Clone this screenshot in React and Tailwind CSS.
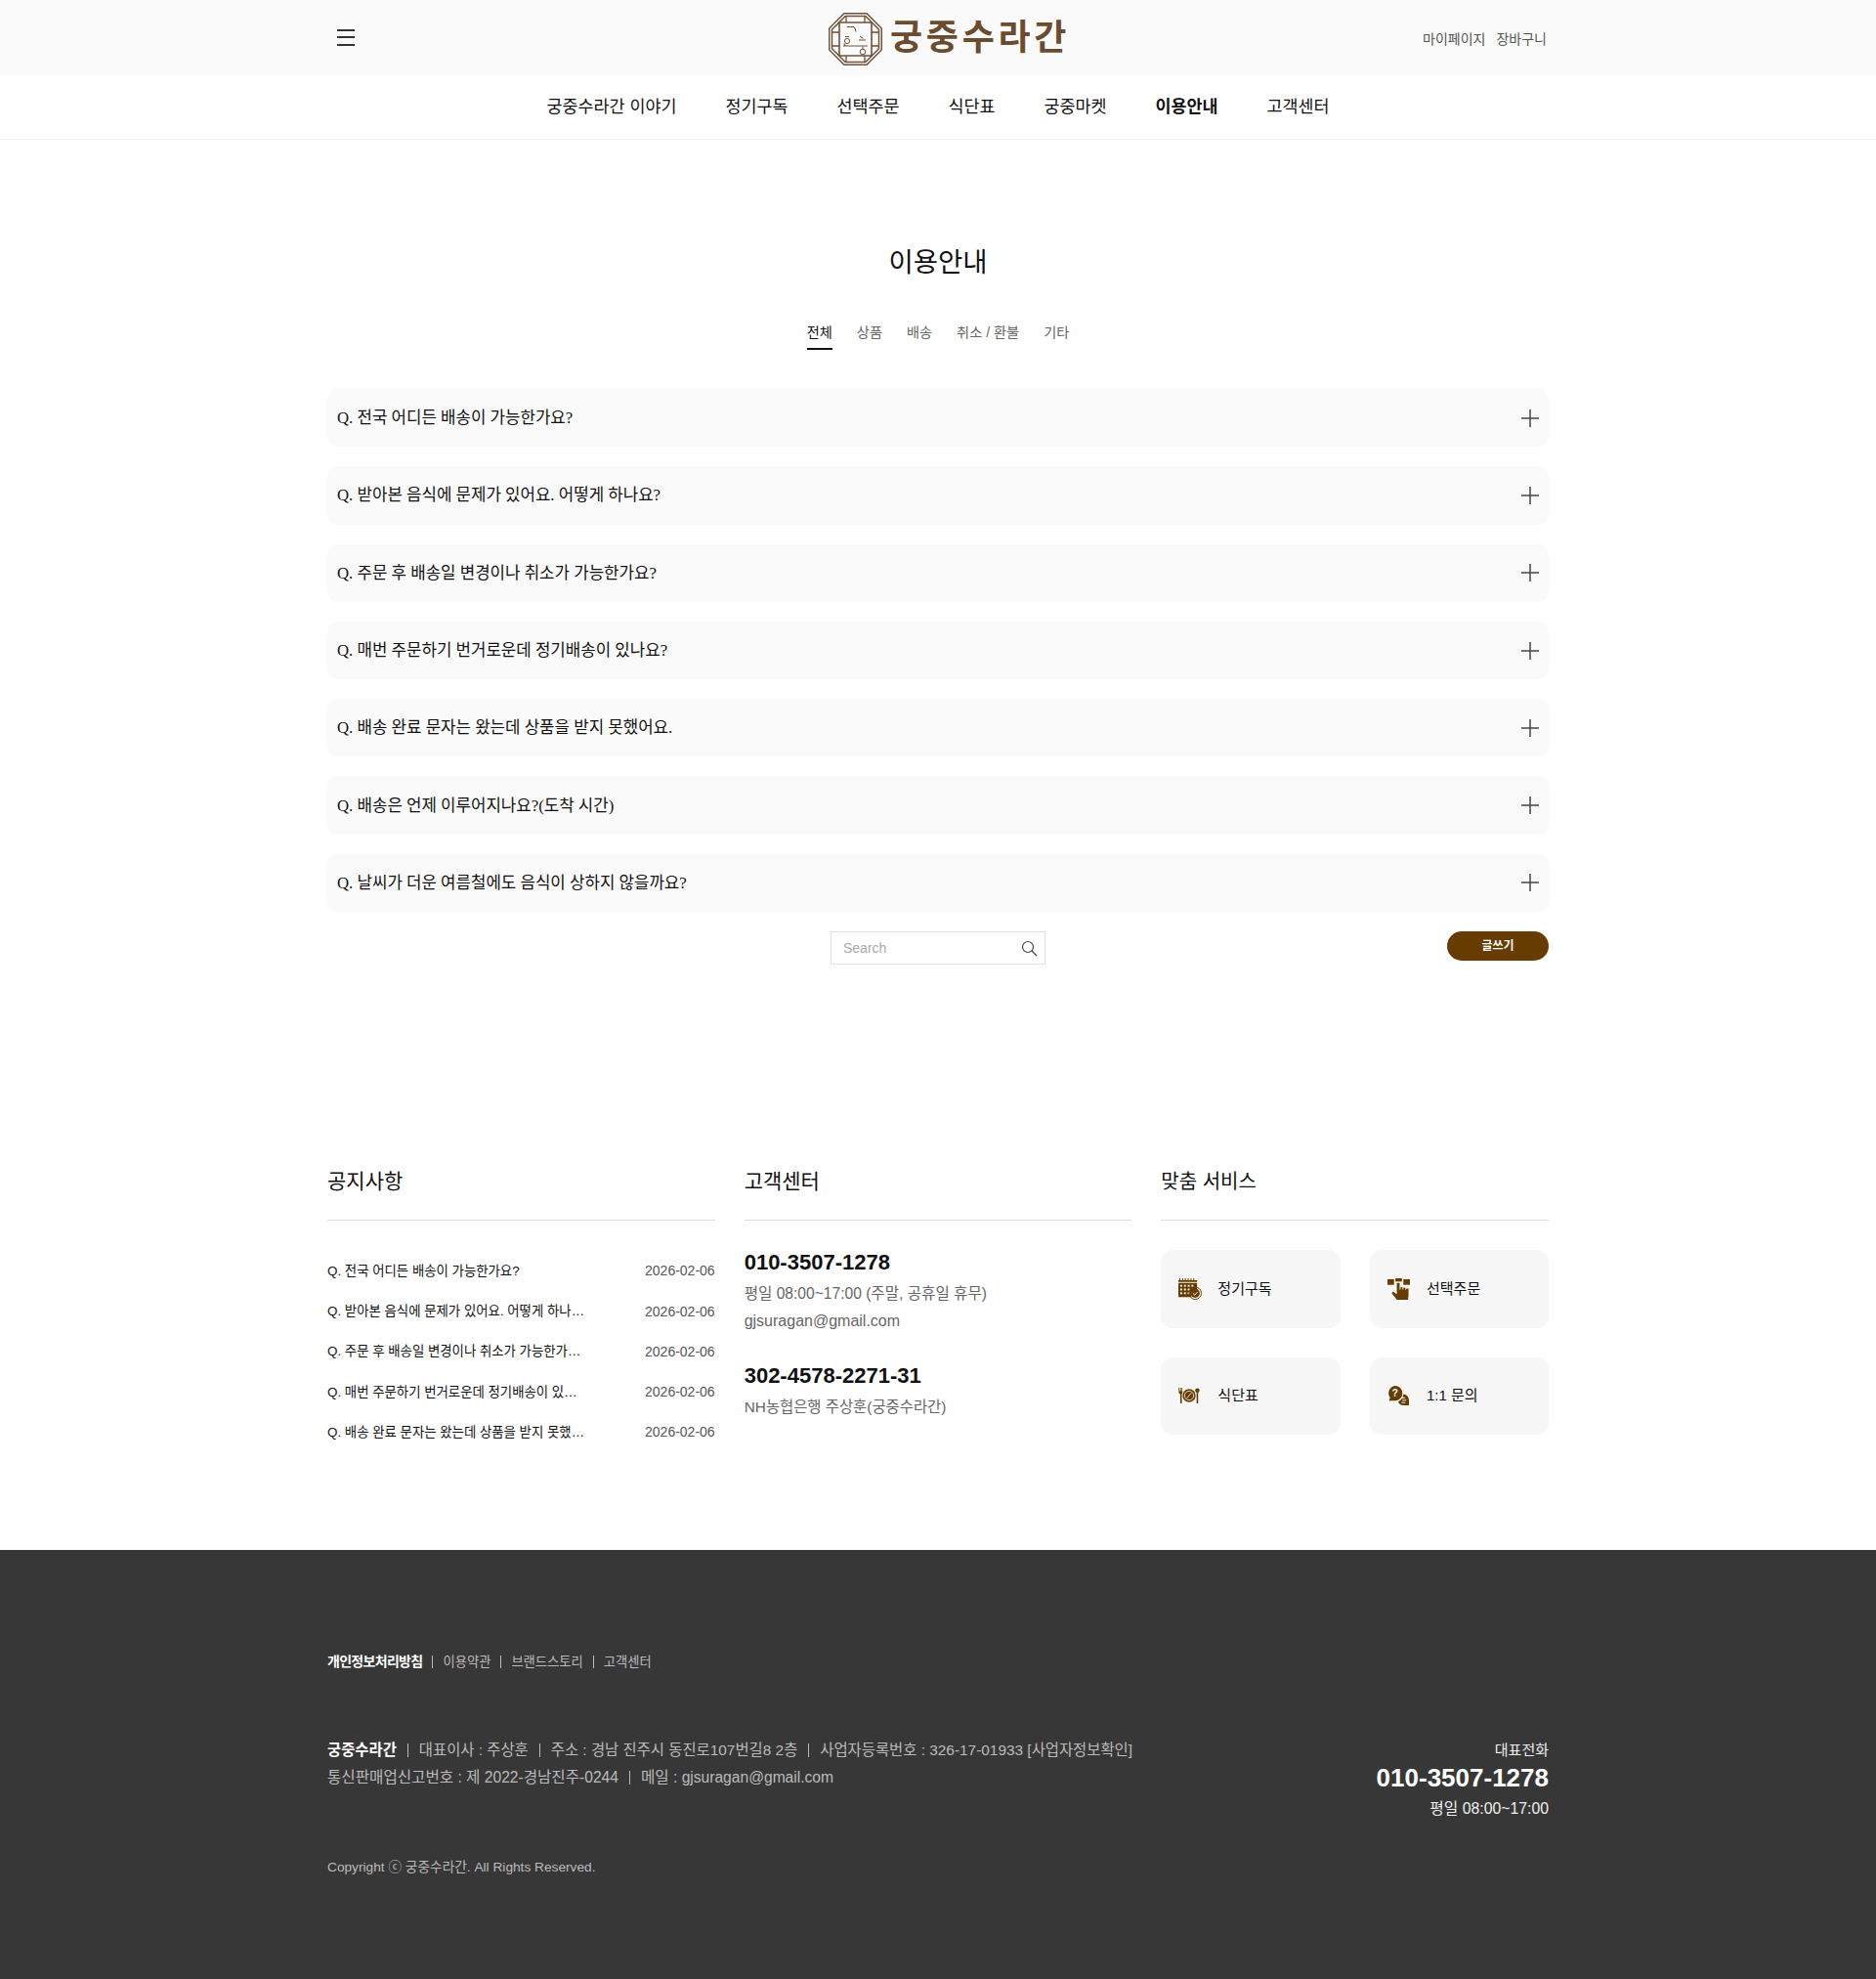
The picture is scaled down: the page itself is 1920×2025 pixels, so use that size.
const sans = `font-['Liberation_Sans','Noto_Sans_CJK_KR',sans-serif]`

const navItems = ["궁중수라간 이야기", "정기구독", "선택주문", "식단표", "궁중마켓", "이용안내", "고객센터"]
const tabs = ["전체", "상품", "배송", "취소 / 환불", "기타"]
const faqs = [
 "전국 어디든 배송이 가능한가요?",
 "받아본 음식에 문제가 있어요. 어떻게 하나요?",
 "주문 후 배송일 변경이나 취소가 가능한가요?",
 "매번 주문하기 번거로운데 정기배송이 있나요?",
 "배송 완료 문자는 왔는데 상품을 받지 못했어요.",
 "배송은 언제 이루어지나요?(도착 시간)",
 "날씨가 더운 여름철에도 음식이 상하지 않을까요?",
]

function Emblem() {
 return (
  <svg width="55" height="54" viewBox="0 0 55 54" fill="none" stroke="#6f5238">
   <path d="M16 .7H39L54.3 16V38L39 53.3H16L.7 38V16Z" strokeWidth="1.5" />
   <path d="M17.2 3.5H37.8L51.5 17.2V36.8L37.8 50.5H17.2L3.5 36.8V17.2Z" strokeWidth="1.5" />
   <path d="M11 10H44V44H11Z" strokeWidth="1.6" />
   <path d="M18 3.5V10M37 3.5V10M18 44V50.5M37 44V50.5M3.5 20H11M3.5 34H11M44 20H51.5M44 34H51.5" strokeWidth="1.3" />
   <path d="M19 14.5h6.5c1.6 1 2.4 2.6 2.4 5" strokeWidth="1.1" />
   <circle cx="19" cy="29" r="2.6" strokeWidth="1" />
   <path d="M17 24.5h4M32 24l3.5 2.5M31 28h7" strokeWidth="1" />
   <path d="M15 34H40M16 31.5c0 2 .5 2.5 2 2.5" strokeWidth="1.1" />
   <circle cx="35" cy="40" r="2.8" strokeWidth="1" />
   <path d="M35 34.5v2.5" strokeWidth="1" />
  </svg>
 )
}

function CalendarIcon() {
 return (
  <svg width="24" height="22" viewBox="0 0 25 23" fill="#663c00">
   <path d="M0 2h20v2H0zM1 0h1v2H1zM4 0h1v2H4zM7 0h1v2H7zM10 0h1v2h-1zM13 0h1v2h-1zM16 0h1v2h-1z" />
   <path d="M0 5h20v7.6a6.5 6.5 0 0 0-6 6.4v1H0z" />
   <g fill="#f7f7f7">
    <rect x="2" y="7" width="2" height="2" />
    <rect x="6" y="7" width="2" height="2" />
    <rect x="10" y="7" width="2" height="2" />
    <rect x="14" y="7" width="2" height="2" />
    <rect x="2" y="11" width="2" height="2" />
    <rect x="6" y="11" width="2" height="2" />
    <rect x="10" y="11" width="2" height="2" />
    <rect x="2" y="15" width="2" height="2" />
    <rect x="6" y="15" width="2" height="2" />
    <rect x="10" y="15" width="2" height="2" />
   </g>
   <circle cx="18" cy="16" r="6.5" fill="none" stroke="#663c00" strokeWidth="1" />
   <circle cx="18" cy="16" r="4.8" />
   <path d="M15.5 16l2 2 3-3.5" fill="none" stroke="#f7f7f7" strokeWidth="1" />
  </svg>
 )
}

function HandIcon() {
 return (
  <svg width="23" height="22" viewBox="0 0 24 23" fill="#663c00">
   <rect x="0" y="1" width="7" height="6" />
   <rect x="8.500" y="0" width="7" height="3.500" />
   <rect x="17" y="1" width="7" height="6" />
   <path d="M10 5h3v7h1V9.500h2V12h1v-2h2v2h1v-1h2.500v7.500L22 23H10L4.500 16l1.500-1.500 4 2.500z" />
  </svg>
 )
}

function PlateIcon() {
 return (
  <svg width="22" height="16" viewBox="0 0 24 18" fill="#663c00">
   <path d="M0 0h.9v4h.8V0h.9v4h.8V0h.9v5.500L3.600 7.500V18H1.800V7.500L0 5.500z" />
   <circle cx="12" cy="9" r="7.500" />
   <circle cx="12" cy="9" r="5.200" fill="none" stroke="#f7f7f7" strokeWidth=".9" />
   <path d="M9.500 12l5-6" stroke="#f7f7f7" strokeWidth="1" />
   <circle cx="21.500" cy="3" r="2.500" />
   <rect x="20.600" y="4" width="1.800" height="14" />
  </svg>
 )
}

function ChatIcon() {
 return (
  <svg width="23" height="21" viewBox="0 0 24 22" fill="#663c00">
   <path d="M8 0a8 8 0 0 1 0 16H1.500l1.300-3.200A8 8 0 0 1 8 0z" />
   <text x="8" y="12" textAnchor="middle" fontSize="11" fontWeight="700" fill="#f7f7f7" fontFamily="Liberation Sans">?</text>
   <path d="M17 9a6.500 6.500 0 0 1 6 6.500V21h-6a6 6 0 0 1-5.500-4A9 9 0 0 0 17 9z" />
   <path d="M15 13h4M16 15.500h4M15 18h4" stroke="#f7f7f7" strokeWidth="1" />
  </svg>
 )
}

const services = [
 { name: "정기구독", icon: <CalendarIcon />, w: "w-[184px]" },
 { name: "선택주문", icon: <HandIcon />, w: "w-[183px]" },
 { name: "식단표", icon: <PlateIcon />, w: "w-[184px]" },
 { name: "1:1 문의", icon: <ChatIcon />, w: "w-[183px]" },
]

function Sep({ className }) {
 return <span className={`inline-block w-px bg-[#bbb] ${className}`} />
}

function App() {
 return (
  <div className={`${sans} w-full min-h-[2025px] bg-white text-[#111]`}>
   <header className="h-[77px] bg-[#fafafa]">
    <div className="mx-auto w-[1250px] h-full flex items-center justify-between relative">
     <button className="ml-[10px] flex flex-col gap-[5.5px] w-[18px] -mt-[1px]">
      <span className="block h-[2px] bg-[#333]" />
      <span className="block h-[2px] bg-[#333]" />
      <span className="block h-[2px] bg-[#333]" />
     </button>
     <div className="absolute left-[513px] top-[13px] flex items-center gap-[8px]">
      <Emblem />
      <span className="pb-[10px] text-[36px] leading-[40px] font-bold tracking-[3.7px] text-[#6b4c2f] font-['Noto_Sans_CJK_KR',sans-serif]">궁중수라간</span>
     </div>
     <div className="flex gap-[11px] pr-[2px] pt-[4px] text-[14px] text-[#555]">
      <span>마이페이지</span>
      <span>장바구니</span>
     </div>
    </div>
   </header>

   <nav className="h-[66px] border-b border-[#f0f0f0] flex items-center justify-center gap-[50px] text-[17.4px] text-[#111]">
    {navItems.map((item) => (
     <span key={item} className={item === "이용안내" ? "font-bold" : ""}>{item}</span>
    ))}
   </nav>

   <main className="mx-auto w-[1250px]">
    <h2 className="mt-[106px] h-[40px] leading-[40px] text-center text-[27.5px] font-normal text-[#111]">이용안내</h2>

    <div className="mt-[41px] flex justify-center gap-[25px] text-[14.2px] text-[#666]">
     {tabs.map((tab, i) => (
      <span key={tab} className={`h-[28px] leading-[20px] ${i === 0 ? "border-b-2 border-[#111] text-[#111]" : ""}`}>{tab}</span>
     ))}
    </div>

    <div className="mt-[40px] flex flex-col gap-[20px]">
     {faqs.map((q) => (
      <div key={q} className="h-[59.3px] px-[10px] rounded-[10px] bg-[#fafafa] flex items-center justify-between">
       <span className="text-[16.8px] text-[#111] font-['Liberation_Serif','Noto_Sans_CJK_KR',serif]">Q. {q}</span>
       <svg width="18" height="18" viewBox="0 0 18 18" stroke="#444" strokeWidth="1.5">
        <path d="M9 0v18M0 9h18" />
       </svg>
      </div>
     ))}
    </div>

    <div className="mt-[20px] flex items-start">
     <div className="flex-1" />
     <div className="w-[220px] h-[34px] border border-[#e2e2e2] flex items-center justify-between pl-[12px] pr-[7px]">
      <span className="text-[14px] text-[#aaa]">Search</span>
      <svg width="17" height="17" viewBox="0 0 17 17" fill="none" stroke="#444" strokeWidth="1.2">
       <circle cx="7" cy="7" r="5.5" />
       <path d="M11 11l5 5" />
      </svg>
     </div>
     <div className="flex-1 flex justify-end">
      <button className="w-[104px] h-[30px] rounded-full bg-[#663c00] text-white text-[12px] font-bold">글쓰기</button>
     </div>
    </div>

    <section className="mt-[201px] grid grid-cols-3 gap-[30px]">
     <div>
      <h3 className="h-[61px] pt-[8px] leading-[26px] text-[21px] font-normal border-b border-[#ddd] text-[#111]">공지사항</h3>
      <ul className="mt-[31px]">
       {faqs.slice(0, 5).map((q) => (
        <li key={q} className="h-[41.3px] flex items-center justify-between text-[14px]">
         <span className="w-[264px] truncate text-[13.4px] text-[#111]">Q. {q}</span>
         <span className="text-[#555]">2026-02-06</span>
        </li>
       ))}
      </ul>
     </div>

     <div>
      <h3 className="h-[61px] pt-[8px] leading-[26px] text-[21px] font-normal border-b border-[#ddd] text-[#111]">고객센터</h3>
      <div className="mt-[28.5px] text-[16px] text-[#666]">
       <p className="h-[28px] leading-[28px] text-[22px] font-bold text-[#111]">010-3507-1278</p>
       <p className="mt-[4px] h-[28px] leading-[28px] text-[15.6px]">평일 08:00~17:00 (주말, 공휴일 휴무)</p>
       <p className="h-[28px] leading-[28px]">gjsuragan@gmail.com</p>
       <p className="mt-[28px] h-[28px] leading-[28px] text-[22px] font-bold text-[#111]">302-4578-2271-31</p>
       <p className="mt-[4px] h-[28px] leading-[28px] text-[15.4px]">NH농협은행 주상훈(궁중수라간)</p>
      </div>
     </div>

     <div>
      <h3 className="h-[61px] pt-[8px] leading-[26px] text-[20px] font-normal border-b border-[#ddd] text-[#111]">맞춤 서비스</h3>
      <div className="mt-[30px] flex flex-wrap justify-between gap-y-[30px]">
       {services.map((s) => (
        <div key={s.name} className={`${s.w} h-[79.5px] rounded-[12px] bg-[#f7f7f7] flex items-center pl-[18px]`}>
         <span className="w-[40px] flex items-center">{s.icon}</span>
         <span className="text-[15px] text-[#111]">{s.name}</span>
        </div>
       ))}
      </div>
     </div>
    </section>
   </main>

   <footer className="mt-[99.4px] h-[439px] bg-[#373737] pt-[105px]">
    <div className="mx-auto w-[1250px] text-[#bbb]">
     <div className="h-[20px] flex items-center text-[13.3px]">
      <span className="text-[14px] font-bold text-white tracking-[-0.7px]">개인정보처리방침</span>
      <Sep className="h-[13px] mx-[10px]" />
      <span>이용약관</span>
      <Sep className="h-[13px] mx-[10px]" />
      <span>브랜드스토리</span>
      <Sep className="h-[13px] mx-[10px]" />
      <span>고객센터</span>
     </div>

     <div className="mt-[66px] flex justify-between items-start">
      <div className="leading-[28px]">
       <div className="flex items-center text-[15.4px]">
        <span className="font-bold text-white">궁중수라간</span>
        <Sep className="h-[14px] mx-[11px]" />
        <span>대표이사 : 주상훈</span>
        <Sep className="h-[14px] mx-[11px]" />
        <span>주소 : 경남 진주시 동진로107번길8 2층</span>
        <Sep className="h-[14px] mx-[11px]" />
        <span>사업자등록번호 : 326-17-01933 [사업자정보확인]</span>
       </div>
       <div className="flex items-center text-[15.6px]">
        <span>통신판매업신고번호 : 제 2022-경남진주-0244</span>
        <Sep className="h-[14px] mx-[11px]" />
        <span>메일 : gjsuragan@gmail.com</span>
       </div>
      </div>
      <div className="text-right text-[#eee]">
       <p className="h-[28px] leading-[28px] text-[15px]">대표전화</p>
       <p className="h-[28px] leading-[28px] text-[26px] font-bold text-white">010-3507-1278</p>
       <p className="mt-[4px] h-[28px] leading-[28px] text-[15.8px]">평일 08:00~17:00</p>
      </div>
     </div>

     <p className="mt-[36px] h-[20px] leading-[20px] text-[13.7px]">Copyright ⓒ 궁중수라간. All Rights Reserved.</p>
    </div>
   </footer>
  </div>
 )
}

export default App
